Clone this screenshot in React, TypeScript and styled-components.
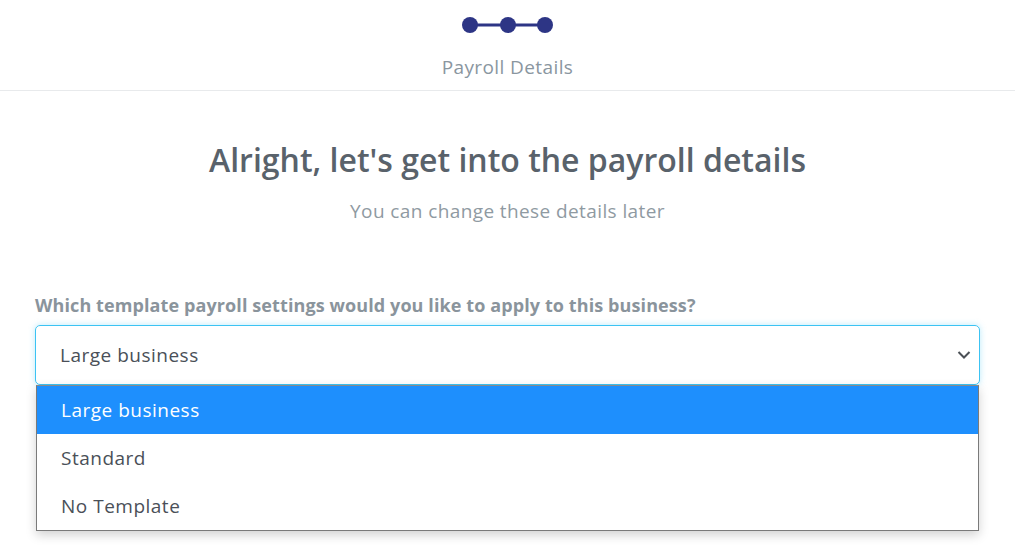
import React from "react";
import styled, { createGlobalStyle } from "styled-components";

const Global = createGlobalStyle`
  html, body { margin: 0; padding: 0; background: #fff; }
  body { font-family: "Open Sans", "Noto Sans", sans-serif; -webkit-font-smoothing: antialiased; }
  * { box-sizing: border-box; }
`;

const Page = styled.div`
  width: 1019px;
  height: 550px;
  overflow: hidden;
  display: flex;
  flex-direction: column;
  padding-right: 4px;
`;

const Header = styled.header`
  display: flex;
  flex-direction: column;
  align-items: center;
  padding-top: 16px;
  height: 91px;
  border-bottom: 1px solid #e8eaec;
`;

const StepTitle = styled.div`
  margin-top: 21px;
  font-size: 19px;
  letter-spacing: 0.4px;
  color: #8a969f;
  line-height: 24px;
`;

const Main = styled.main`
  display: flex;
  flex-direction: column;
  padding: 0 35px 0 35px;
`;

const Heading = styled.h1`
  margin: 49px 0 0;
  text-align: center;
  font-size: 32px;
  font-weight: 600;
  color: #59626b;
  line-height: 40px;
`;

const Sub = styled.p`
  margin: 19px 0 0;
  text-align: center;
  font-size: 19px;
  letter-spacing: 0.4px;
  color: #8f9aa2;
  line-height: 24px;
`;

const Label = styled.label`
  margin-top: 71px;
  font-size: 18px;
  font-weight: 700;
  letter-spacing: 0.1px;
  color: #8a949c;
  line-height: 22px;
  display: block;
`;

const Field = styled.div`
  position: relative;
  margin-top: 9px;
`;

const Select = styled.div`
  height: 60px;
  border: 1px solid #3cc3f3;
  border-radius: 5px;
  box-shadow: 0 0 6px rgba(60, 195, 243, 0.35);
  display: flex;
  align-items: center;
  justify-content: space-between;
  padding: 0 8px 0 24px;
  font-size: 19px;
  letter-spacing: 0.5px;
  color: #4a5058;
`;

const Menu = styled.ul`
  position: absolute;
  left: 1px;
  right: 1px;
  top: 60px;
  margin: 0;
  padding: 0;
  list-style: none;
  background: #fff;
  border: 1px solid #7a7a7a;
  border-top: 1px solid #8a8a8a;
  box-shadow: 0 4px 10px rgba(0, 0, 0, 0.18);
  z-index: 2;
`;

const Item = styled.li<{ $active?: boolean }>`
  height: 48px;
  display: flex;
  align-items: center;
  padding-left: 24px;
  font-size: 19px;
  letter-spacing: 0.5px;
  color: ${(p) => (p.$active ? "#fff" : "#4a5058")};
  background: ${(p) => (p.$active ? "#1e8ffd" : "#fff")};
`;

const Stepper = () => (
  <svg width="94" height="18" viewBox="0 0 94 18">
    <line x1="9" y1="9" x2="85" y2="9" stroke="#2d3585" strokeWidth="3" />
    <circle cx="9" cy="9" r="8" fill="#2d3585" />
    <circle cx="47" cy="9" r="8" fill="#2d3585" />
    <circle cx="84" cy="9" r="8" fill="#2d3585" />
  </svg>
);

const Chevron = () => (
  <svg width="14" height="10" viewBox="0 0 14 10">
    <path d="M1.5 2 L7 7.5 L12.5 2" fill="none" stroke="#4b5056" strokeWidth="2" />
  </svg>
);

export default function App() {
  return (
    <Page>
      <Global />
      <Header>
        <Stepper />
        <StepTitle>Payroll Details</StepTitle>
      </Header>
      <Main>
        <Heading>Alright, let's get into the payroll details</Heading>
        <Sub>You can change these details later</Sub>
        <Label>Which template payroll settings would you like to apply to this business?</Label>
        <Field>
          <Select>
            <span>Large business</span>
            <Chevron />
          </Select>
          <Menu>
            <Item $active>Large business</Item>
            <Item>Standard</Item>
            <Item>No Template</Item>
          </Menu>
        </Field>
      </Main>
    </Page>
  );
}
